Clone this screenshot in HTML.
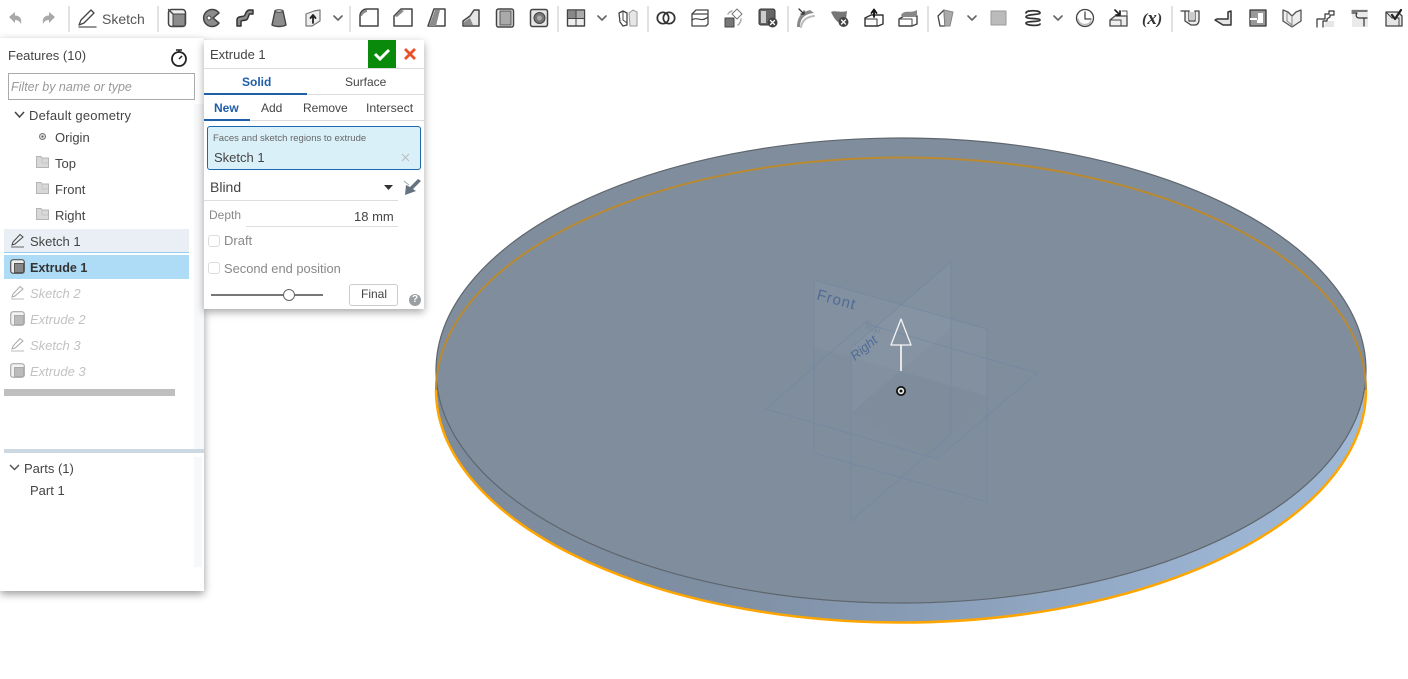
<!DOCTYPE html>
<html><head><meta charset="utf-8"><style>
html,body{margin:0;padding:0;background:#fff}
body{width:1408px;height:679px;position:relative;overflow:hidden;font-family:"Liberation Sans",sans-serif;font-size:13px;color:#444}
.a{position:absolute;white-space:nowrap}
.t{position:absolute;white-space:nowrap;line-height:16px;margin-top:1px}
svg.i{position:absolute;top:8px;width:20px;height:20px;overflow:visible}
svg.i *{stroke-linejoin:round;stroke-linecap:round}
.sep{position:absolute;top:6px;width:2px;height:26px;background:#e2e2e2}
.g{fill:#8c8c8c}.l{fill:#e6e6e6}.w{fill:#fff}.s{stroke:#4a4a4a;stroke-width:1.5;fill:none}
svg.m{position:absolute}
</style></head><body>
<svg class="a" style="left:0;top:0" width="1408" height="679" viewBox="0 0 1408 679">
<defs><linearGradient id="side" x1="0" x2="1" y1="0" y2="0"><stop offset="0" stop-color="#7d8b9b"/><stop offset=".3" stop-color="#7f8fa3"/><stop offset=".5" stop-color="#879bb4"/><stop offset=".85" stop-color="#9bb4d2"/><stop offset="1" stop-color="#9fb8d6"/></linearGradient></defs>
<path d="M436 370.500V390A465 232.500 0 0 0 1366 390V370.500Z" fill="url(#side)"/>
<ellipse cx="901" cy="390" rx="465" ry="232.500" fill="url(#side)"/>
<ellipse cx="901" cy="370.500" rx="465" ry="232.500" fill="#7f8d9c" stroke="#5f666e" stroke-width="1.200"/>
<path d="M436 390A465 232.500 0 0 1 1366 390" fill="none" stroke="#bb8a30" stroke-width="2"/>
<path d="M436 390A465 232.500 0 0 0 1366 390" fill="none" stroke="#ffa500" stroke-width="2.500"/>
<path d="M814 280L987 329V396L814 347Z" fill="#fff" fill-opacity=".03"/>
<path d="M851 348L951 262V328L851 413Z" fill="#fff" fill-opacity=".03"/>
<path d="M851 413L901 370L987 396L937 459Z" fill="#6f8299" fill-opacity=".05"/>
<g fill="none" stroke="#6f87a5" stroke-opacity=".6">
<path d="M851 348L951 262V434L851 521Z"/>
<path d="M814 280L987 329V502L814 453Z"/>
<path d="M766 409L864 323L1037 373L937 459Z"/>
</g>
<text x="816" y="299" transform="rotate(15.500 816 299)" font-family="Liberation Sans" font-size="15" fill="#4f6b96" letter-spacing="1">Front</text>
<text x="855" y="361" transform="rotate(-40 855 361)" font-family="Liberation Sans" font-size="13" font-style="italic" fill="#4f6b96">Right</text>
<text x="863" y="328" transform="rotate(16 863 328)" font-family="Liberation Sans" font-size="11" fill="#75889c">Top</text>
<path d="M901 345V371" stroke="#e6e6e6" stroke-width="2" fill="none"/>
<path d="M901 319L891 345H911Z" fill="none" stroke="#f4f4f4" stroke-width="1.300" stroke-linejoin="round"/>
<circle cx="901" cy="391" r="5" fill="#111"/><circle cx="901" cy="391" r="3.200" fill="#eee"/><circle cx="901" cy="391" r="1.500" fill="#111"/>
</svg>

<!-- toolbar -->
<svg class="i" style="left:5px" viewBox="0 0 20 20"><path d="M4 9L10 4V7.500C15 7.500 17 11 16 16C14.500 13 13 12 10 12V15Z" fill="#a8a8a8"/></svg>
<svg class="i" style="left:39px" viewBox="0 0 20 20"><path d="M16 9L10 4V7.500C5 7.500 3 11 4 16C5.500 13 7 12 10 12V15Z" fill="#a8a8a8"/></svg>
<div class="sep" style="left:68px"></div>
<svg class="i" style="left:78px" viewBox="0 0 20 20"><path d="M1 17L3 12L13 2L16 5L6 15Z" fill="none" stroke="#444" stroke-width="1.300"/><path d="M1 19H18" stroke="#555" stroke-width="1.300"/></svg>
<div class="t" style="left:102px;top:10px;font-size:14px;color:#555">Sketch</div>
<div class="sep" style="left:157px"></div>
<svg class="i" style="left:167px" viewBox="0 0 20 20"><rect x="1.500" y="1.500" width="17" height="17" rx="3" fill="#eee" stroke="#444" stroke-width="1.500"/><rect x="6" y="6" width="12" height="12" class="g" stroke="#444"/><path d="M1.500 1.500L6 6" class="s"/></svg>
<svg class="i" style="left:201px" viewBox="0 0 20 20"><path d="M18 5A8.500 8.500 0 1 0 18 15L12 10Z" class="g" stroke="#444" stroke-width="1.500"/><circle cx="8" cy="10" r="2" class="w" stroke="#444"/></svg>
<svg class="i" style="left:235px" viewBox="0 0 20 20"><path d="M2 18V12C2 8 7 9 9 8C11 7 10 3 14 2H18V6H15C13 6 14 11 11 12C8 13 6 12 6 14V18Z" class="g" stroke="#333" stroke-width="1.500"/></svg>
<svg class="i" style="left:269px" viewBox="0 0 20 20"><path d="M6 3H14L17 17C13 19 7 19 3 17Z" class="g" stroke="#444" stroke-width="1.400"/><ellipse cx="10" cy="3" rx="4" ry="1.200" class="l" stroke="#444"/></svg>
<svg class="i" style="left:303px" viewBox="0 0 20 20"><path d="M3 6L11 3L17 2V13L9 18H3Z" fill="#eee" stroke="#777" stroke-width="1.200"/><path d="M10 15V8M7.500 10L10 7L12.500 10" stroke="#222" stroke-width="1.800" fill="none"/></svg>
<svg class="i" style="left:328px" viewBox="0 0 20 20"><path d="M6 8L10 12L14 8" stroke="#666" stroke-width="1.600" fill="none"/></svg>
<div class="sep" style="left:349px"></div>
<svg class="i" style="left:359px" viewBox="0 0 20 20"><path d="M1 18V8C1 4 4 1 8 1H19V18Z" class="w" stroke="#444" stroke-width="1.500"/><path d="M1.500 8C2 4 4 2 8 1.500V4C5 5 4 6 3 8Z" class="g"/></svg>
<svg class="i" style="left:393px" viewBox="0 0 20 20"><path d="M1 18V8L8 1H19V18Z" class="w" stroke="#444" stroke-width="1.500"/><path d="M1.500 8L8 1.500L11 3L4 9Z" class="g"/></svg>
<svg class="i" style="left:427px" viewBox="0 0 20 20"><path d="M7 1H18V18H1Z" class="w" stroke="#444" stroke-width="1.500"/><path d="M8 2H13L9 18H2Z" class="g"/></svg>
<svg class="i" style="left:461px" viewBox="0 0 20 20"><path d="M2 18V13L9 8L13 2H18V18Z" class="l" stroke="#444" stroke-width="1.500"/><path d="M3 17V14L9 10L12 17Z" class="g"/></svg>
<svg class="i" style="left:495px" viewBox="0 0 20 20"><rect x="1.500" y="1" width="17" height="18" rx="2" class="l" stroke="#444" stroke-width="1.500"/><rect x="5" y="3" width="11" height="14" fill="#aaa" stroke="#555"/></svg>
<svg class="i" style="left:529px" viewBox="0 0 20 20"><rect x="1.500" y="1.500" width="17" height="17" rx="2" class="l" stroke="#444" stroke-width="1.500"/><circle cx="10.500" cy="10" r="5.500" fill="#777" stroke="#444"/><circle cx="10.500" cy="10" r="2.500" fill="#aaa"/></svg>
<div class="sep" style="left:557px"></div>
<svg class="i" style="left:566px" viewBox="0 0 20 20"><rect x="1.500" y="2" width="17" height="16" fill="#eee" stroke="#444" stroke-width="1.400"/><rect x="2" y="3" width="7.500" height="7" fill="#888"/><rect x="10.500" y="3" width="7.500" height="7" fill="#aaa"/><path d="M1.500 10.500H18.500M10 2V18" stroke="#444"/></svg>
<svg class="i" style="left:592px" viewBox="0 0 20 20"><path d="M6 8L10 12L14 8" stroke="#666" stroke-width="1.600" fill="none"/></svg>
<svg class="i" style="left:618px" viewBox="0 0 20 20"><path d="M1 5L5 3L9 5V17L5 18L2 14Z" class="w" stroke="#444" stroke-width="1.300"/><path d="M5 3V12L9 15" fill="none" stroke="#444"/><path d="M11 5L15 2L19 4V18H12Z" class="l" stroke="#999"/></svg>
<div class="sep" style="left:647px"></div>
<svg class="i" style="left:656px" viewBox="0 0 20 20"><circle cx="7" cy="10" r="5.700" fill="none" stroke="#333" stroke-width="1.700"/><circle cx="13" cy="10" r="5.700" fill="none" stroke="#333" stroke-width="1.700"/></svg>
<svg class="i" style="left:690px" viewBox="0 0 20 20"><path d="M2 6L6 2H18V16L16 18H2Z" class="w" stroke="#444" stroke-width="1.300"/><path d="M2 6H17M2 12C7 8 11 15 18 9" fill="none" stroke="#444" stroke-width="1.200"/></svg>
<svg class="i" style="left:724px" viewBox="0 0 20 20"><rect x="1" y="10" width="9" height="9" fill="#777" stroke="#444"/><path d="M13 1L18 6L13 11L8 6Z" class="w" stroke="#777"/><path d="M4 6A8 8 0 0 1 8 3M17 11A8 8 0 0 1 14 17" fill="none" stroke="#aaa" stroke-width="1.500"/></svg>
<svg class="i" style="left:758px" viewBox="0 0 20 20"><rect x="1" y="1" width="16" height="16" rx="2" fill="#666" stroke="#333"/><rect x="3" y="3" width="5" height="12" fill="#ccc"/><circle cx="14.500" cy="14.500" r="5" fill="#444"/><path d="M12.500 12.500L16.500 16.500M16.500 12.500L12.500 16.500" stroke="#fff" stroke-width="1.300"/></svg>
<div class="sep" style="left:787px"></div>
<svg class="i" style="left:796px" viewBox="0 0 20 20"><path d="M4 19C4 11 8 6 18 5L14 2L8 4C3 7 1 13 1 19Z" fill="#888"/><path d="M5 19C6 13 10 9 18 8" fill="none" stroke="#bbb" stroke-width="2"/><path d="M3 1L8 6M8 3V6H5" stroke="#333" stroke-width="1.300" fill="none"/></svg>
<svg class="i" style="left:830px" viewBox="0 0 20 20"><path d="M1 4C5 2 10 5 17 3L16 12L8 14C5 12 3 8 1 4Z" fill="#777"/><circle cx="13.500" cy="14" r="5" fill="#444"/><path d="M11.500 12L15.500 16M15.500 12L11.500 16" stroke="#fff" stroke-width="1.300"/></svg>
<svg class="i" style="left:864px" viewBox="0 0 20 20"><path d="M1 10L7 7H19V16L14 18H1Z" class="w" stroke="#333" stroke-width="1.400"/><path d="M1 11H13V18" fill="none" stroke="#333"/><path d="M10 9V3M7.500 5L10 1.500L12.500 5" stroke="#111" stroke-width="1.800" fill="none"/></svg>
<svg class="i" style="left:898px" viewBox="0 0 20 20"><path d="M1 11L6 8H19V16L14 18H1Z" class="w" stroke="#444" stroke-width="1.400"/><path d="M1 11H14V18" fill="none" stroke="#444"/><path d="M3 7C7 1 12 6 19 2V8L14 9H4Z" fill="#888"/></svg>
<div class="sep" style="left:927px"></div>
<svg class="i" style="left:936px" viewBox="0 0 20 20"><path d="M2 8L8 2L9 18H4Z" class="w" stroke="#444" stroke-width="1.300"/><path d="M8 2L17 4L14 18L9 18Z" fill="#aaa" stroke="#888"/></svg>
<svg class="i" style="left:962px" viewBox="0 0 20 20"><path d="M6 8L10 12L14 8" stroke="#666" stroke-width="1.600" fill="none"/></svg>
<svg class="i" style="left:989px" viewBox="0 0 20 20"><rect x="2" y="3" width="15" height="14" fill="#bbb" stroke="#999"/></svg>
<svg class="i" style="left:1023px" viewBox="0 0 20 20"><path d="M3 5C3 2 17 2 17 5C17 7 3 6 3 9C3 11 17 10 17 12C17 14 3 13 3 15C3 18 17 18 17 16" fill="none" stroke="#333" stroke-width="1.700"/></svg>
<svg class="i" style="left:1048px" viewBox="0 0 20 20"><path d="M6 8L10 12L14 8" stroke="#666" stroke-width="1.600" fill="none"/></svg>
<svg class="i" style="left:1075px" viewBox="0 0 20 20"><circle cx="10" cy="10" r="8.500" fill="none" stroke="#444" stroke-width="1.300"/><path d="M10 4V11H16" fill="none" stroke="#444" stroke-width="1.300"/><path d="M3 11A7 7 0 0 0 16 13" fill="none" stroke="#bbb" stroke-width="1.500"/></svg>
<svg class="i" style="left:1109px" viewBox="0 0 20 20"><path d="M1 12L6 8H18V18H1Z" fill="#eee" stroke="#444" stroke-width="1.300"/><path d="M1 12H12V18" fill="none" stroke="#444"/><path d="M6 2L11 7M11 3V7H7" stroke="#222" stroke-width="1.700" fill="none"/><path d="M13 3H18V8" fill="none" stroke="#555"/></svg>
<div class="t" style="left:1142px;top:9px;font:italic bold 16px/18px 'Liberation Serif',serif;color:#333">(<span style="font-size:19px">x</span>)</div>
<div class="sep" style="left:1171px"></div>
<svg class="i" style="left:1180px" viewBox="0 0 20 20"><path d="M1 3H5V13L11 17H15C18 17 19 14 19 12V3H15V13H9V3H5" fill="#eee" stroke="#444" stroke-width="1.300"/><path d="M9 4H15V12H9Z" fill="#ccc"/></svg>
<svg class="i" style="left:1214px" viewBox="0 0 20 20"><path d="M1 12L9 17H17V3L14 4V11H8L3 11Z" class="l" stroke="#333" stroke-width="1.500"/></svg>
<svg class="i" style="left:1248px" viewBox="0 0 20 20"><rect x="2" y="2" width="16" height="16" fill="#999" stroke="#333" stroke-width="1.300"/><path d="M10 5H15V15H9V10H2V12H10Z" class="w"/><path d="M2.500 12H9V17.500H2.500Z" fill="#999"/></svg>
<svg class="i" style="left:1282px" viewBox="0 0 20 20"><path d="M1 2L6 4L10 8L14 4L19 2V13L10 19L1 13Z" fill="#eee" stroke="#555" stroke-width="1.300"/><path d="M10 8V19M5 5V13L10 17" fill="none" stroke="#888"/></svg>
<svg class="i" style="left:1316px" viewBox="0 0 20 20"><path d="M10 13H18V19H8Z" class="l"/><path d="M1 19V11H9V6H13V3H18V7H14V9L11 11V13H7V19" fill="none" stroke="#333" stroke-width="1.200"/></svg>
<svg class="i" style="left:1350px" viewBox="0 0 20 20"><rect x="2" y="1" width="16" height="18" fill="#eaeaea"/><path d="M2 3H17M2 5H7C5 8 7 10 9 10H17M14 10V18" fill="none" stroke="#333" stroke-width="1.200"/></svg>
<svg class="i" style="left:1384px" viewBox="0 0 20 20"><path d="M2 4H14L18 8V18H2Z" class="l" stroke="#444" stroke-width="1.300"/><path d="M2 4L8 10H15V18" fill="none" stroke="#444"/><path d="M8 7L11 11L17 2" fill="none" stroke="#222" stroke-width="2.200"/></svg>

<!-- feature panel -->
<div class="a" style="left:0;top:38px;width:204px;height:553px;background:#fff;box-shadow:0 3px 8px rgba(0,0,0,.4)"></div>
<div class="a" style="left:194px;top:104px;width:10px;height:345px;background:#f7f8fa"></div>
<div class="a" style="left:194px;top:457px;width:8px;height:110px;background:#f7f8fa"></div>
<div class="t" style="left:8px;top:47px;color:#444">Features (10)</div>
<svg class="m" style="left:170px;top:48px" width="18" height="20" viewBox="0 0 18 20"><circle cx="9" cy="11" r="7" fill="none" stroke="#222" stroke-width="1.800"/><path d="M6 2H12M9 2V4M9 11L12 8" stroke="#222" stroke-width="1.500" fill="none"/></svg>
<div class="a" style="left:8px;top:73px;width:185px;height:25px;border:1px solid #aaa"></div>
<div class="t" style="left:11px;top:78px;font-style:italic;color:#999;font-size:12.500px">Filter by name or type</div>
<svg class="m" style="left:13px;top:110px" width="13" height="10" viewBox="0 0 13 10"><path d="M2 2L6.500 7L11 2" fill="none" stroke="#444" stroke-width="1.500"/></svg>
<div class="t" style="left:29px;top:107px;letter-spacing:.2px">Default geometry</div>
<svg class="m" style="left:38px;top:132px" width="9" height="9" viewBox="0 0 9 9"><circle cx="4.500" cy="4.500" r="3" fill="#ddd" stroke="#777"/><circle cx="4.500" cy="4.500" r="1" fill="#555"/></svg>
<div class="t" style="left:55px;top:129px">Origin</div>
<svg class="m" style="left:36px;top:155px" width="13" height="13"><path d="M.5 1.500H5L6 3H12.500V12.500H.5Z" fill="#d8d8d8" stroke="#b5b5b5"/><path d="M6 3V8H12" fill="none" stroke="#c4c4c4"/></svg>
<div class="t" style="left:55px;top:155px">Top</div>
<svg class="m" style="left:36px;top:181px" width="13" height="13"><path d="M.5 1.500H5L6 3H12.500V12.500H.5Z" fill="#d8d8d8" stroke="#b5b5b5"/><path d="M6 3V8H12" fill="none" stroke="#c4c4c4"/></svg>
<div class="t" style="left:55px;top:181px">Front</div>
<svg class="m" style="left:36px;top:207px" width="13" height="13"><path d="M.5 1.500H5L6 3H12.500V12.500H.5Z" fill="#d8d8d8" stroke="#b5b5b5"/><path d="M6 3V8H12" fill="none" stroke="#c4c4c4"/></svg>
<div class="t" style="left:55px;top:207px">Right</div>

<div class="a" style="left:4px;top:229px;width:185px;height:23px;background:#e9eff4;border-bottom:1px solid #8fd0f0"></div>
<svg class="m" style="left:11px;top:233px" width="14" height="15" viewBox="0 0 14 15"><path d="M1 12L2 9L9 1.500L12 4L4 11Z" fill="none" stroke="#444"/><path d="M0 14H13" stroke="#666"/></svg>
<div class="t" style="left:30px;top:233px">Sketch 1</div>
<div class="a" style="left:4px;top:255px;width:185px;height:24px;background:#aedbf5"></div>
<svg class="m" style="left:10px;top:259px" width="15" height="15" viewBox="0 0 15 15"><rect x=".7" y=".7" width="13.600" height="13.600" rx="2.500" fill="#eee" stroke="#555" stroke-width="1.200"/><rect x="4.500" y="4.500" width="9" height="9" fill="#888" stroke="#555"/></svg>
<div class="t" style="left:30px;top:259px;font-weight:bold;font-size:12.600px;color:#333">Extrude 1</div>
<svg class="m" style="left:11px;top:285px" width="14" height="15" viewBox="0 0 14 15"><path d="M1 12L2 9L9 1.500L12 4L4 11Z" fill="none" stroke="#aaa"/><path d="M0 14H13" stroke="#bbb"/></svg>
<div class="t" style="left:30px;top:285px;font-style:italic;color:#c2c2c2">Sketch 2</div>
<svg class="m" style="left:10px;top:311px" width="15" height="15" viewBox="0 0 15 15"><rect x=".7" y=".7" width="13.600" height="13.600" rx="2.500" fill="#f2f2f2" stroke="#aaa" stroke-width="1.200"/><rect x="4.500" y="4.500" width="9" height="9" fill="#bbb" stroke="#aaa"/></svg>
<div class="t" style="left:30px;top:311px;font-style:italic;color:#c2c2c2">Extrude 2</div>
<svg class="m" style="left:11px;top:337px" width="14" height="15" viewBox="0 0 14 15"><path d="M1 12L2 9L9 1.500L12 4L4 11Z" fill="none" stroke="#aaa"/><path d="M0 14H13" stroke="#bbb"/></svg>
<div class="t" style="left:30px;top:337px;font-style:italic;color:#c2c2c2">Sketch 3</div>
<svg class="m" style="left:10px;top:363px" width="15" height="15" viewBox="0 0 15 15"><rect x=".7" y=".7" width="13.600" height="13.600" rx="2.500" fill="#f2f2f2" stroke="#aaa" stroke-width="1.200"/><rect x="4.500" y="4.500" width="9" height="9" fill="#bbb" stroke="#aaa"/></svg>
<div class="t" style="left:30px;top:363px;font-style:italic;color:#c2c2c2">Extrude 3</div>
<div class="a" style="left:4px;top:389px;width:171px;height:7px;background:#bfbfbf"></div>
<div class="a" style="left:4px;top:449px;width:200px;height:4px;background:#ccd9e3"></div>
<svg class="m" style="left:8px;top:463px" width="13" height="10" viewBox="0 0 13 10"><path d="M2 2L6.500 6.500L11 2" fill="none" stroke="#555" stroke-width="1.500"/></svg>
<div class="t" style="left:24px;top:460px">Parts (1)</div>
<div class="t" style="left:30px;top:482px">Part 1</div>

<!-- dialog -->
<div class="a" style="left:204px;top:40px;width:220px;height:269px;background:#fff;box-shadow:0 3px 8px rgba(0,0,0,.35)"></div>
<div class="t" style="left:210px;top:46px">Extrude 1</div>
<div class="a" style="left:368px;top:40px;width:28px;height:28px;background:#0a8a0a"></div>
<svg class="m" style="left:368px;top:40px" width="28" height="28" viewBox="0 0 28 28"><path d="M7 14L12 19L21 10" fill="none" stroke="#fff" stroke-width="3"/></svg>
<svg class="m" style="left:403px;top:47px" width="14" height="14" viewBox="0 0 14 14"><path d="M2 2L12 12M12 2L2 12" stroke="#e8502a" stroke-width="2.800"/></svg>
<div class="a" style="left:204px;top:68px;width:220px;height:1px;background:#ddd"></div>
<div class="t" style="left:242px;top:73px;font-size:12px;color:#1f5ea8;font-weight:bold">Solid</div>
<div class="t" style="left:345px;top:73px;font-size:12px">Surface</div>
<div class="a" style="left:204px;top:94px;width:220px;height:1px;background:#ddd"></div>
<div class="a" style="left:204px;top:93px;width:103px;height:2px;background:#1f5ea8"></div>
<div class="t" style="left:214px;top:99px;font-size:12px;color:#1f5ea8;font-weight:bold">New</div>
<div class="t" style="left:261px;top:99px;font-size:12px">Add</div>
<div class="t" style="left:303px;top:99px;font-size:12px">Remove</div>
<div class="t" style="left:366px;top:99px;font-size:12.300px">Intersect</div>
<div class="a" style="left:204px;top:120px;width:220px;height:1px;background:#ddd"></div>
<div class="a" style="left:204px;top:119px;width:46px;height:2px;background:#1f5ea8"></div>
<div class="a" style="left:207px;top:126px;width:212px;height:42px;background:#daf0f9;border:1px solid #1a68ad;border-radius:3px"></div>
<div class="t" style="left:213px;top:130px;font-size:9.500px;color:#666">Faces and sketch regions to extrude</div>
<div class="t" style="left:214px;top:149px">Sketch 1</div>
<svg class="m" style="left:401px;top:153px" width="9" height="9" viewBox="0 0 9 9"><path d="M1 1L8 8M8 1L1 8" stroke="#bbb"/></svg>
<div class="t" style="left:210px;top:178px;font-size:14px">Blind</div>
<svg class="m" style="left:384px;top:185px" width="9" height="5"><path d="M0 0H9L4.500 5Z" fill="#333"/></svg>
<svg class="m" style="left:401px;top:177px" width="20" height="20" viewBox="0 0 20 20"><path d="M4 18L5 8L9 10L17 2L20 4L12 12L15 14Z" fill="#66727f"/><path d="M3 4L8 8" stroke="#9aa" fill="none"/></svg>
<div class="a" style="left:204px;top:200px;width:194px;height:1px;background:#ddd"></div>
<div class="t" style="left:209px;top:206px;font-size:12px;color:#888">Depth</div>
<div class="t" style="left:354px;top:208px;font-size:13px">18 mm</div>
<div class="a" style="left:246px;top:226px;width:152px;height:1px;background:#ddd"></div>
<div class="a" style="left:208px;top:235px;width:10px;height:10px;border:1px solid #ddd;border-radius:3px"></div>
<div class="t" style="left:224px;top:232px;font-size:13px;color:#888">Draft</div>
<div class="a" style="left:208px;top:262px;width:10px;height:10px;border:1px solid #ddd;border-radius:3px"></div>
<div class="t" style="left:224px;top:260px;font-size:12.900px;color:#888">Second end position</div>
<div class="a" style="left:211px;top:294px;width:112px;height:2px;background:#777"></div>
<div class="a" style="left:283px;top:289px;width:10px;height:10px;border-radius:50%;background:#fff;border:1px solid #666"></div>
<div class="a" style="left:349px;top:284px;width:47px;height:20px;border:1px solid #ccc;border-radius:3px;background:#fff"></div>
<div class="t" style="left:361px;top:285px;font-size:12px">Final</div>
<div class="a" style="left:409px;top:294px;width:12px;height:12px;border-radius:50%;background:#9a9fa3;color:#fff;font:bold 10px/12px 'Liberation Sans',sans-serif;text-align:center">?</div>
</body></html>
